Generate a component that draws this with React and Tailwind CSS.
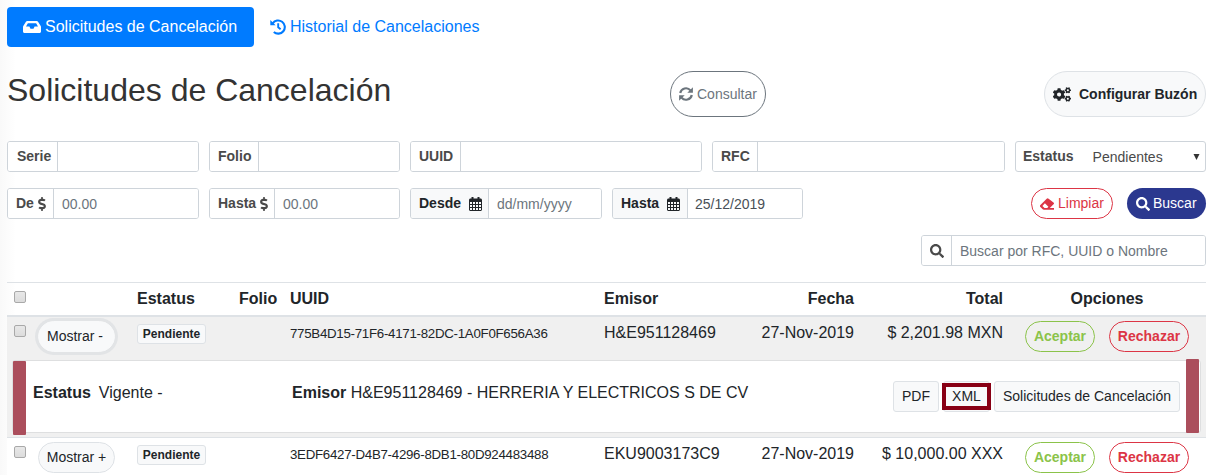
import React from "react";
import { FaCogs, FaDollarSign, FaSearch } from "react-icons/fa";

const COLS = "grid-cols-[31px_99px_102px_51px_314px_250px_149px_203px]";

function InboxIcon() {
  return (
    <svg className="mr-1 h-[12px] w-[18px] shrink-0" viewBox="0 0 18 12" fill="none">
      <path fill="currentColor" fillRule="evenodd" d="M4.300 0h9.400c.5 0 .9.200 1.200.6l2.800 4.500c.2.300.3.600.3.900v4.500c0 .8-.7 1.500-1.500 1.500h-15C.7 12 0 11.300 0 10.500V6c0-.3.1-.6.300-.9L3.100.6C3.400.2 3.800 0 4.300 0zM4.900 2.200 3 5.500h3.400l1.100 2.200h3l1.100-2.200H15l-1.900-3.300z" />
    </svg>
  );
}

function HistoryIcon() {
  return (
    <svg className="mr-1 h-4 w-4 shrink-0" viewBox="0 0 16 16" fill="none" stroke="currentColor">
      <path d="M2.700 4.400A6.600 6.600 0 1 1 3.800 13" strokeWidth="2.100" />
      <path d="M.3.900v5.300h5.300z" fill="currentColor" stroke="none" />
      <path d="M8.200 4.300v4l2.400 1.900" strokeWidth="1.900" />
    </svg>
  );
}

function SyncIcon() {
  return (
    <svg className="mr-1 h-[14px] w-[14px] shrink-0" viewBox="0 0 14 14" fill="none" stroke="currentColor">
      <path d="M1.200 6A5.900 5.900 0 0 1 11.500 3.400M12.800 8A5.900 5.900 0 0 1 2.500 10.600" strokeWidth="2.200" />
      <path d="M13.900.3v5.500H8.300zM.1 13.700V8.200h5.600z" fill="currentColor" stroke="none" />
    </svg>
  );
}

function EraserIcon() {
  return (
    <svg className="mr-1 h-[14px] w-[14px] shrink-0" viewBox="0 0 14 14" fill="none">
      <path fill="currentColor" fillRule="evenodd" d="M13.500 7.300 9.800 11H14v1.700H3.800c-.4 0-.8-.2-1.100-.5L.4 9.900a1.300 1.300 0 0 1 0-1.900l6.300-6.300a1.300 1.300 0 0 1 1.900 0l4.900 3.700a1.300 1.300 0 0 1 0 1.900zM4.900 6.300 2.400 8.900 4.500 11h2.700l1.200-1.200z" />
    </svg>
  );
}

function CalendarIcon() {
  return (
    <svg className="ml-2 h-[14px] w-[13px] shrink-0" viewBox="0 0 13 14" fill="none">
      <path fill="#212529" d="M2.500 0h2v1.500h4V0h2v1.500h1c.8 0 1.500.7 1.500 1.500v9.500c0 .8-.7 1.500-1.500 1.500h-10C.7 14 0 13.300 0 12.500V3c0-.8.7-1.500 1.500-1.500h1z" />
      <path fill="#f8f9fa" d="M1 5h2v2H1zM4 5h2v2H4zM7 5h2v2H7zM10 5h2v2h-2zM1 8h2v2H1zM4 8h2v2H4zM7 8h2v2H7zM10 8h2v2h-2zM1 11h2v2H1zM4 11h2v2H4zM7 11h2v2H7zM10 11h2v2h-2z" />
    </svg>
  );
}

function Field({ width, labelWidth, label, children, tinted }) {
  return (
    <div className={`flex h-[31px] shrink-0 overflow-hidden rounded-[3px] border border-[#ced4da] text-[14px] ${width}`}>
      <div className={`flex shrink-0 items-center whitespace-nowrap border-r border-[#ced4da] pl-2 font-bold ${labelWidth} ${tinted ? "bg-[#f8f9fa] text-[#212529]" : "bg-white text-[#4a4a4a]"}`}>
        {label}
      </div>
      <div className="flex flex-1 items-center whitespace-nowrap bg-white pl-2 pt-px text-[#6c757d]">{children}</div>
    </div>
  );
}

function Checkbox() {
  return <span className="block h-[12px] w-[12px] rounded-[2px] border border-[#a9a9a9] bg-linear-to-b from-[#e8e8e8] to-[#dcdcdc]" />;
}

function Row({ open, uuid, emisor, total }) {
  return (
    <div className={`grid h-[43px] ${COLS} ${open ? "bg-[#f0f0f0]" : "bg-white"}`}>
      <div className="pl-[7px] pt-2"><Checkbox /></div>
      <div className="pt-1">
        <div className={`flex h-[31px] w-[77px] items-center justify-center rounded-full border text-[14px] ${open ? "border-[#f8f9fa] bg-[#f8f9fa] pr-[3px] shadow-[0_0_0_3px_#e2e4e6]" : "border-[#dee2e6] bg-[#f8f9fa]"}`}>
          Mostrar {open ? "-" : "+"}
        </div>
      </div>
      <div className="pt-[7px]">
        <div className="flex h-[20px] w-[69px] items-center justify-center rounded-[3px] border border-[#dee2e6] bg-[#f8f9fa] text-[12px] font-bold">Pendiente</div>
      </div>
      <div />
      <div className="whitespace-nowrap pt-[7px] text-[13.3px] leading-[19px] tracking-[-0.28px]">{uuid}</div>
      <div className="flex justify-between pt-1 leading-6"><span>{emisor}</span><span>27-Nov-2019</span></div>
      <div className="pt-1 text-right leading-6">{total}</div>
      <div className="flex gap-[14px] pl-[22px] pt-1">
        <div className="flex h-[31px] w-[70px] items-center justify-center rounded-full border border-[#8bc34a] text-[14px] font-bold text-[#8bc34a]">Aceptar</div>
        <div className="flex h-[31px] w-[80px] items-center justify-center rounded-full border border-[#dc3545] text-[14px] font-bold text-[#dc3545]">Rechazar</div>
      </div>
    </div>
  );
}

export default function App() {
  return (
    <div className="h-[475px] w-[1213px] overflow-hidden bg-[linear-gradient(to_right,#f9f9f9,#ffffff_16px)] pl-[7px] pr-[7px] pt-[7px] font-['Liberation_Sans',Arial,sans-serif] text-[16px] text-[#212529]">
      <nav className="flex h-10">
        <div className="flex w-[247px] items-center rounded-[4px] bg-[#007bff] pl-4 text-white">
          <InboxIcon />Solicitudes de Cancelación
        </div>
        <div className="flex items-center pl-4 text-[#007bff]">
          <HistoryIcon />Historial de Cancelaciones
        </div>
      </nav>

      <header className="mt-6 flex h-[46px]">
        <h1 className="w-[663px] text-[32px] leading-[38px] text-[#333333]">Solicitudes de Cancelación</h1>
        <div className="flex h-[46px] w-[96px] items-center rounded-[23px] border border-[#6c757d] pl-2 text-[14px] text-[#6c757d]">
          <SyncIcon />Consultar
        </div>
        <div className="ml-auto flex h-[46px] w-[162px] items-center rounded-[23px] border border-[#dee2e6] bg-[#f8f9fa] pl-2 text-[14px] font-bold">
          <FaCogs className="mr-2 h-[15px] w-[18px]" />Configurar Buzón
        </div>
      </header>

      <div className="mt-6 flex gap-[10px]">
        <Field width="w-[192px]" labelWidth="w-[50px]" label={<span className="pl-px">Serie</span>} />
        <Field width="w-[191px]" labelWidth="w-[49px]" label="Folio" />
        <Field width="w-[292px]" labelWidth="w-[50px]" label="UUID" />
        <Field width="w-[293px]" labelWidth="w-[45px]" label="RFC" />
        <div className="flex h-[31px] w-[191px] items-center rounded-[3px] border border-[#ced4da] bg-white pl-[7px] pr-[5px] text-[14px] text-[#4a4a4a]">
          <b>Estatus</b><span className="ml-[19px] pt-px">Pendientes</span>
          <svg className="ml-auto h-[6px] w-[7px]" viewBox="0 0 7 6"><path d="M0.500 0h6L3.500 6z" fill="#333" /></svg>
        </div>
      </div>

      <div className="mt-4 flex">
        <Field width="w-[192px] mr-[10px]" labelWidth="w-[46px]" label={<>De<FaDollarSign className="ml-[3px] h-[14px] w-[10px]" /></>}>00.00</Field>
        <Field width="w-[191px] mr-[10px]" labelWidth="w-[65px]" label={<>Hasta<FaDollarSign className="ml-[3px] h-[14px] w-[10px]" /></>}>00.00</Field>
        <Field width="w-[192px] mr-[10px]" labelWidth="w-[78px]" tinted label={<>Desde<CalendarIcon /></>}>dd/mm/yyyy</Field>
        <Field width="w-[191px]" labelWidth="w-[75px]" tinted label={<>Hasta<CalendarIcon /></>}><span className="-ml-px text-[#495057]">25/12/2019</span></Field>
        <div className="ml-auto flex h-[31px] w-[82px] items-center rounded-full border border-[#dc3545] bg-white pl-2 text-[14px] text-[#dc3545]">
          <EraserIcon />Limpiar
        </div>
        <div className="ml-[14px] flex h-[31px] w-[79px] items-center rounded-full bg-[#2b388f] pl-[9px] text-[14px] text-white">
          <FaSearch className="mr-[3px] h-[14px] w-[14px]" />Buscar
        </div>
      </div>

      <div className="mt-4 flex justify-end">
        <Field width="w-[285px]" labelWidth="w-[30px]" label={<FaSearch className="h-[14px] w-[14px]" />}>Buscar por RFC, UUID o Nombre</Field>
      </div>

      <section className="mt-4">
        <div className={`grid h-[35px] ${COLS} border-b-2 border-t border-b-[#dee2e6] border-t-[#dee2e6] font-bold leading-[31px]`}>
          <div className="pl-[7px] pt-2"><Checkbox /></div>
          <div />
          <div>Estatus</div>
          <div>Folio</div>
          <div>UUID</div>
          <div className="flex justify-between"><span>Emisor</span><span>Fecha</span></div>
          <div className="text-right">Total</div>
          <div className="pl-[5px] text-center">Opciones</div>
        </div>
        <Row open uuid="775B4D15-71F6-4171-82DC-1A0F0F656A36" emisor="H&E951128469" total="$ 2,201.98 MXN" />
        <div className="relative h-[78px] border-b border-[#dee2e6] bg-[#f0f0f0] pl-[5px] pr-[5px]">
          <div className="flex h-[73px] rounded-[3px] border border-[#dedfe0] bg-white pl-5 pr-5">
            <div className="w-[259px] pt-5 leading-6"><b>Estatus</b><span className="ml-2">Vigente -</span></div>
            <div className="pt-5 leading-6"><b>Emisor</b> H&amp;E951128469 - HERRERIA Y ELECTRICOS S DE CV</div>
            <div className="ml-auto flex gap-1 pt-5 text-[14px]">
              <div className="flex h-[31px] w-[46px] items-center justify-center rounded-[3px] border border-[#dee2e6] bg-[#f8f9fa]">PDF</div>
              <div className="relative flex h-[31px] w-[47px] items-center justify-center rounded-[3px] border border-[#dee2e6] bg-[#f8f9fa]">
                XML
                <span className="absolute -left-[2px] top-px h-[27px] w-[49px] border-4 border-[#880015]" />
              </div>
              <div className="flex h-[31px] w-[186px] items-center justify-center rounded-[3px] border border-[#dee2e6] bg-[#f8f9fa]">Solicitudes de Cancelación</div>
            </div>
          </div>
          <span className="absolute left-[6px] top-px h-[74px] w-[13px] rounded-[1px] bg-[#ab4e5c]" />
          <span className="absolute -top-px right-[7px] h-[74px] w-[13px] rounded-[1px] bg-[#ab4e5c]" />
        </div>
        <Row uuid="3EDF6427-D4B7-4296-8DB1-80D924483488" emisor="EKU9003173C9" total="$ 10,000.00 XXX" />
      </section>
    </div>
  );
}
